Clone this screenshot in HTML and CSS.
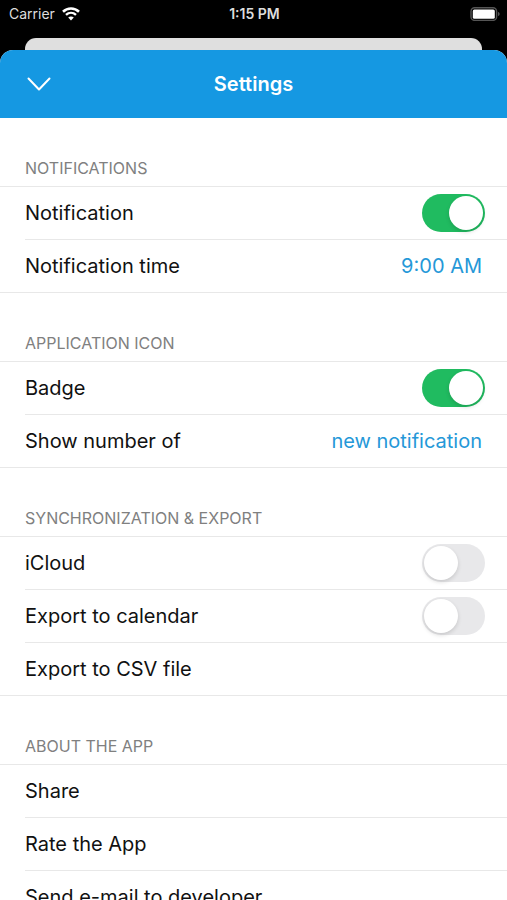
FILE: index.html
```html
<!DOCTYPE html>
<html lang="en">
<head>
<meta charset="utf-8">
<meta name="viewport" content="width=device-width, initial-scale=1">
<title>Settings</title>
<link rel="stylesheet" href="styles.css">
</head>
<body>
<div class="status">
  <div class="carrier">
    <span>Carrier</span>
    <svg class="wifi" viewBox="0 0 18 14" aria-hidden="true">
      <path d="M1 4.7C5.5.4 12.5.4 17 4.7" fill="none" stroke="#fff" stroke-width="2.6"/>
      <path d="M4 7.9C6.9 5.2 11.1 5.2 14 7.9" fill="none" stroke="#fff" stroke-width="2.4"/>
      <path d="M9 13.4 6.2 10.5C7.7 9 10.3 9 11.8 10.5Z" fill="#fff"/>
    </svg>
  </div>
  <time class="clock">1:15 PM</time>
  <svg class="battery" viewBox="0 0 30 14" aria-hidden="true">
    <rect x="1" y=".8" width="25.6" height="12.6" rx="3.6" fill="none" stroke="#555" stroke-width="1.4"/>
    <rect x="2.8" y="2.4" width="22" height="9.4" rx="1.6" fill="#fff"/>
    <path d="M28 5.1C30.2 5.7 30.2 8.5 28 9.1Z" fill="#555"/>
  </svg>
</div>
<div class="backdrop"></div>
<div class="sheet">
  <header class="bar">
    <button class="close" type="button" aria-label="Close">
      <svg viewBox="0 0 24 14" aria-hidden="true"><path d="M1.5 1.5 12 12.5 22.5 1.5" fill="none" stroke="#fff" stroke-width="2" stroke-linecap="round" stroke-linejoin="round"/></svg>
    </button>
    <h1>Settings</h1>
  </header>
  <main>
    <section>
      <h2>NOTIFICATIONS</h2>
      <ul>
        <li><label for="notification">Notification</label><input class="switch" id="notification" type="checkbox" role="switch" checked></li>
        <li><button class="row" type="button"><span>Notification time</span><span class="value">9:00 AM</span></button></li>
      </ul>
    </section>
    <section>
      <h2>APPLICATION ICON</h2>
      <ul>
        <li><label for="badge">Badge</label><input class="switch" id="badge" type="checkbox" role="switch" checked></li>
        <li><button class="row" type="button"><span>Show number of</span><span class="value">new notification</span></button></li>
      </ul>
    </section>
    <section>
      <h2>SYNCHRONIZATION &amp; EXPORT</h2>
      <ul>
        <li><label for="icloud">iCloud</label><input class="switch" id="icloud" type="checkbox" role="switch"></li>
        <li><label for="calendar">Export to calendar</label><input class="switch" id="calendar" type="checkbox" role="switch"></li>
        <li><button class="row" type="button">Export to CSV file</button></li>
      </ul>
    </section>
    <section>
      <h2>ABOUT THE APP</h2>
      <ul>
        <li><button class="row" type="button">Share</button></li>
        <li><button class="row" type="button">Rate the App</button></li>
        <li><button class="row" type="button">Send e-mail to developer</button></li>
      </ul>
    </section>
  </main>
</div>
</body>
</html>
```
FILE: styles.css
```css
* {
  box-sizing: border-box;
}

html {
  height: 100%;
}

body {
  display: flex;
  flex-direction: column;
  height: 100%;
  margin: 0;
  overflow: hidden;
  background: #000;
  color: #111;
  font-family: Inter, "Liberation Sans", sans-serif;
  font-size: 20px;
  line-height: 24px;
}

.status {
  display: grid;
  grid-template-columns: 1fr auto 1fr;
  align-items: center;
  height: 28px;
  margin-bottom: 10px;
  padding: 0 7px 0 9px;
  color: #ddd;
  font-size: 14px;
  line-height: 16px;
}

.carrier {
  display: flex;
  align-items: center;
  gap: 7px;
}

.wifi {
  width: 18px;
  height: 14px;
}

.clock {
  font-weight: 600;
}

.battery {
  width: 30px;
  height: 14px;
  justify-self: end;
}

.backdrop {
  flex: none;
  height: 12px;
  margin: 0 25px;
  border-radius: 11px 11px 0 0;
  background: #dfdfdf;
}

.sheet {
  flex: 1;
  min-height: 0;
  overflow: hidden;
  border-radius: 13px 13px 0 0;
  background: #fff;
}

.bar {
  display: grid;
  grid-template-columns: 1fr auto 1fr;
  align-items: center;
  height: 68px;
  padding: 0 24px;
  background: #1598e2;
  color: #fff;
}

.bar h1 {
  margin: 0;
  font-size: 20px;
  font-weight: 600;
}

.close {
  display: flex;
  justify-self: start;
  padding: 3px;
  border: 0;
  background: none;
}

.close svg {
  width: 24px;
  height: 14px;
}

h2 {
  display: flex;
  align-items: flex-end;
  height: 68px;
  margin: 0;
  padding: 0 25px 8px;
  color: #808080;
  font-size: 16px;
  font-weight: 400;
  line-height: 20px;
}

ul {
  margin: 0;
  padding: 0;
  border-top: 1px solid #e8e8e8;
  list-style: none;
}

li {
  display: flex;
  align-items: center;
  justify-content: space-between;
  height: 53px;
  margin-left: 25px;
  padding-right: 22px;
  border-bottom: 1px solid #e8e8e8;
}

li:last-child {
  margin-left: 0;
  padding-left: 25px;
}

.row {
  display: flex;
  flex: 1;
  align-items: center;
  justify-content: space-between;
  padding: 0 3px 0 0;
  border: 0;
  background: none;
  color: inherit;
  font: inherit;
}

.value {
  color: #2598d8;
}

.switch {
  display: flex;
  align-items: center;
  width: 63px;
  height: 38px;
  margin: 0;
  padding: 2px;
  appearance: none;
  border-radius: 19px;
  background: #e8e8ea;
}

.switch::before {
  content: "";
  width: 34px;
  height: 34px;
  border-radius: 50%;
  background: #fff;
  box-shadow: 0 2px 4px rgba(0, 0, 0, 0.14);
}

.switch:checked {
  justify-content: flex-end;
  background: #20bb60;
}
```
